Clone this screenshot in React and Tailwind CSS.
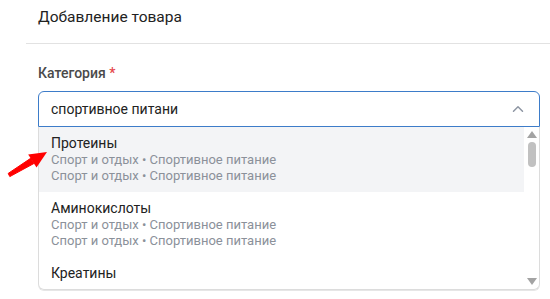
import React from 'react';
import { ChevronUp } from 'lucide-react';

const ITEMS = [
  { title: 'Протеины', active: true },
  { title: 'Аминокислоты' },
];

const PATH = 'Спорт и отдых • Спортивное питание';

function Option({ title, active }) {
  return (
    <div className={`px-3 pt-2 pb-2 h-[65px] ${active ? 'bg-[#f3f4f6]' : ''}`}>
      <p className="text-[14px] leading-[17px] text-[#222]">{title}</p>
      <p className="text-[13px] leading-4 text-[#8b919a] whitespace-nowrap">{PATH}</p>
      <p className="text-[13px] leading-4 text-[#8b919a] whitespace-nowrap">{PATH}</p>
    </div>
  );
}

export default function App() {
  return (
    <div className="relative w-[550px] h-[299px] bg-white overflow-hidden" style={{ fontFamily: 'Roboto, "Noto Sans", sans-serif' }}>
      <div className="pl-[38px] pt-[6px] h-[43px] text-[15.5px] text-[#222]">Добавление товара</div>
      <div className="ml-[26px] border-t border-[#e2e2e2]" />
      <div className="pl-[38px] pr-[10px] pt-[20px]">
        <p className="text-[14px] font-medium text-[#4a4a4a] leading-[18px] mb-[9px]">
          Категория <span className="text-[#e5484d]">*</span>
        </p>
        <div className="flex items-center h-[36px] pl-[12px] pr-[12px] border border-[#3d7cc9] rounded-t-[6px]">
          <span className="flex-1 text-[14px] text-[#222]">спортивное питани</span>
          <ChevronUp className="w-[18px] h-[18px] text-[#8e96a3]" strokeWidth={2} />
        </div>
        <div className="flex h-[163px] border border-t-0 border-[#dcdcdc] rounded-b-[6px] shadow-[0_1px_0_#e6e6e6] overflow-hidden">
          <div className="flex-1">
            {ITEMS.map(it => <Option key={it.title} {...it} />)}
            <div className="px-3 pt-2">
              <p className="text-[14px] leading-[17px] text-[#222]">Креатины</p>
            </div>
          </div>
          <div className="w-[15px] flex flex-col items-center pt-[4px] pb-[4px]">
            <svg width="10" height="7" viewBox="0 0 10 7"><path d="M5 0 L10 7 L0 7 Z" fill="#a3a3a3" /></svg>
            <div className="mt-[4px] w-[8px] h-[25px] rounded-full bg-[#c1c1c1]" />
            <div className="flex-1" />
            <svg width="10" height="7" viewBox="0 0 10 7"><path d="M0 0 L10 0 L5 7 Z" fill="#a3a3a3" /></svg>
          </div>
        </div>
      </div>
      <svg className="absolute left-0 top-[140px]" width="55" height="45" viewBox="0 0 55 45">
        <path d="M9.8 36.6 L33.9 23.5 L30.7 18.3 L8.2 33.4 Z" fill="#ff0000" strokeLinejoin="round" stroke="#ff0000" strokeWidth="1" />
        <path d="M47 12 L36.5 27.4 L28.2 14.4 Z" fill="#ff0000" />
      </svg>
    </div>
  );
}
